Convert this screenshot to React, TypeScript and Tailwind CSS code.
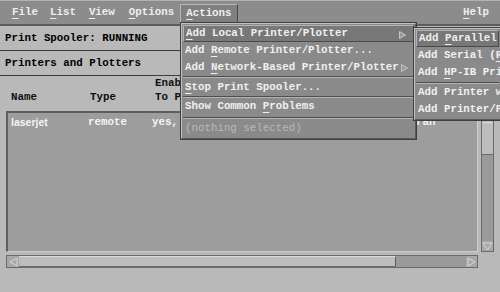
const U = ({ children }: { children: React.ReactNode }) => (
  <span className="underline decoration-1 underline-offset-[3px]">{children}</span>
);

const Arrow = () => (
  <svg width="7" height="8" viewBox="0 0 7 8" className="absolute right-[7px] top-[5px]">
    <polygon points="0.5,0.5 6.5,4 0.5,7.5" fill="#9a9a9a" stroke="#c4c4c4" strokeWidth="1" />
  </svg>
);

type ItemProps = {
  children: React.ReactNode;
  active?: boolean;
  arrow?: boolean;
  tall?: boolean;
};

const MenuItem = ({ children, active, arrow, tall }: ItemProps) => (
  <div
    className={
      active
        ? "relative flex items-center h-[17px] pl-[2px] mx-[1px] bg-[#787878] border-t border-l border-t-[#b4b4b4] border-l-[#b4b4b4] border-b border-r border-b-[#4a4a4a] border-r-[#4a4a4a] whitespace-pre"
        : tall
        ? "relative flex items-center h-[18px] pl-[3px] whitespace-pre"
        : "relative flex items-center h-[17px] pl-[3px] whitespace-pre"
    }
  >
    <span>{children}</span>
    {arrow && <Arrow />}
  </div>
);

const Sep = () => (
  <div className="h-[2px] mx-[1px] border-t border-t-[#4e4e4e] border-b border-b-[#b4b4b4]" />
);

const ScrollArrow = ({ dir }: { dir: "left" | "right" | "up" | "down" }) => {
  const pts =
    dir === "left"
      ? "9,1 9,9 2,5"
      : dir === "right"
      ? "2,1 2,9 9,5"
      : dir === "up"
      ? "1,9 10,9 5.5,2"
      : "1,2 10,2 5.5,9";
  return (
    <svg width="11" height="10" viewBox="0 0 11 10">
      <polygon points={pts} fill="#a8a8a8" stroke="#d8d8d8" strokeWidth="1" />
    </svg>
  );
};

export default function App() {
  return (
    <div className="relative w-[500px] h-[292px] overflow-hidden bg-[#b9b9b9] font-['Liberation_Mono',monospace] font-bold text-[10.8px] leading-none">
      {/* Menu bar */}
      <div className="flex items-center h-[26px] bg-[#8c8c8c] border-t border-t-[#b2b2b2] border-b-2 border-b-[#5c5c5c] text-[#eeeeee]">
        <span className="ml-[12px]"><U>F</U>ile</span>
        <span className="ml-[12px]"><U>L</U>ist</span>
        <span className="ml-[13px]"><U>V</U>iew</span>
        <span className="ml-[14px]"><U>O</U>ptions</span>
        <span className="ml-[6px] mt-[2px] flex items-center h-[20px] px-[5px] bg-[#808080] border-t border-l border-t-[#b6b6b6] border-l-[#b6b6b6] border-b border-r border-b-[#484848] border-r-[#484848]">
          <span><U>A</U>ctions</span>
        </span>
        <span className="ml-auto mr-[11px]"><U>H</U>elp</span>
      </div>

      {/* Status */}
      <div className="flex items-center h-[25px] pl-[5px] border-b border-b-[#3c3c3c] text-black">
        Print Spooler: RUNNING
      </div>
      <div className="flex items-center h-[25px] pl-[5px] border-b border-b-[#3c3c3c] text-black">
        Printers and Plotters
      </div>

      {/* Column headers */}
      <div className="flex items-end h-[35px] pl-[11px] pb-[7px] text-[#101010] leading-[14px]">
        <span className="w-[79px]">Name</span>
        <span className="w-[65px]">Type</span>
        <span className="flex flex-col">
          <span>Enab</span>
          <span>To P</span>
        </span>
      </div>

      {/* List + vertical scrollbar */}
      <div className="flex h-[141px]">
        <div className="ml-[6px] w-[472px] bg-[#9d9d9d] border-t-2 border-l-2 border-t-[#5e5e5e] border-l-[#5e5e5e] border-b border-r border-b-[#cfcfcf] border-r-[#cfcfcf] pt-[3px]">
          <div className="flex items-center h-[12px] pl-[3px] text-[#f4f4f4] whitespace-nowrap">
            <span className="w-[77px] font-['Liberation_Sans',sans-serif] text-[10.5px]">laserjet</span>
            <span className="w-[64px]">remote</span>
            <span className="w-[264px]">yes,</span>
            <span>ran</span>
          </div>
        </div>
        <div className="ml-[3px] w-[13px] flex flex-col bg-[#9a9a9a] border border-[#6a6a6a]">
          <div className="h-[10px] flex items-center justify-center">
            <ScrollArrow dir="up" />
          </div>
          <div className="h-[33px] bg-[#bdbdbd] border-t border-t-[#dcdcdc] border-b border-b-[#6c6c6c]" />
          <div className="flex-1" />
          <div className="h-[10px] flex items-center justify-center bg-[#a8a8a8]">
            <ScrollArrow dir="down" />
          </div>
        </div>
      </div>

      {/* Horizontal scrollbar */}
      <div className="mt-[3px] ml-[6px] w-[472px] h-[13px] flex bg-[#9a9a9a] border border-[#6a6a6a]">
        <div className="w-[12px] flex items-center justify-center bg-[#a8a8a8]">
          <ScrollArrow dir="left" />
        </div>
        <div className="w-[377px] bg-[#bdbdbd] border-t border-t-[#dcdcdc] border-r border-r-[#5a5a5a] border-b border-b-[#6c6c6c]" />
        <div className="flex-1" />
        <div className="w-[11px] flex items-center justify-center bg-[#a8a8a8]">
          <ScrollArrow dir="right" />
        </div>
      </div>

      {/* Actions dropdown */}
      <div className="absolute left-[180px] top-[22px] w-[237px] border border-[#3e3e3e] bg-[#8a8a8a] text-[#f0f0f0]">
        <div className="border-t border-l border-t-[#c2c2c2] border-l-[#c2c2c2] border-b border-r border-b-[#5a5a5a] border-r-[#5a5a5a] pt-[1px] pb-[1px]">
          <MenuItem active arrow><U>A</U>dd Local Printer/Plotter</MenuItem>
          <MenuItem>Add <U>R</U>emote Printer/Plotter...</MenuItem>
          <MenuItem arrow>Add <U>N</U>etwork-Based Printer/Plotter</MenuItem>
          <Sep />
          <MenuItem tall><U>S</U>top Print Spooler...</MenuItem>
          <Sep />
          <MenuItem>Show Common <U>P</U>roblems</MenuItem>
          <div className="h-[5px] flex flex-col justify-center">
            <Sep />
          </div>
          <MenuItem>
            <span className="font-normal text-[#b8b8b8]">(nothing selected)</span>
          </MenuItem>
        </div>
      </div>

      {/* Local printer submenu */}
      <div className="absolute left-[413px] top-[27px] w-[87px] overflow-hidden border-t border-l border-b border-[#3e3e3e] bg-[#8a8a8a] text-[#f0f0f0]">
        <div className="border-t border-l border-t-[#c2c2c2] border-l-[#c2c2c2] border-b border-b-[#5a5a5a] pt-[1px] pb-[1px]">
          <MenuItem active>Add <U>P</U>arallel</MenuItem>
          <MenuItem>Add Serial (<U>R</U></MenuItem>
          <MenuItem>Add <U>H</U>P-IB Pri</MenuItem>
          <div className="h-[3px] flex flex-col justify-center">
            <Sep />
          </div>
          <MenuItem>Add Printer w</MenuItem>
          <MenuItem>Add Printer/P</MenuItem>
        </div>
      </div>
    </div>
  );
}
